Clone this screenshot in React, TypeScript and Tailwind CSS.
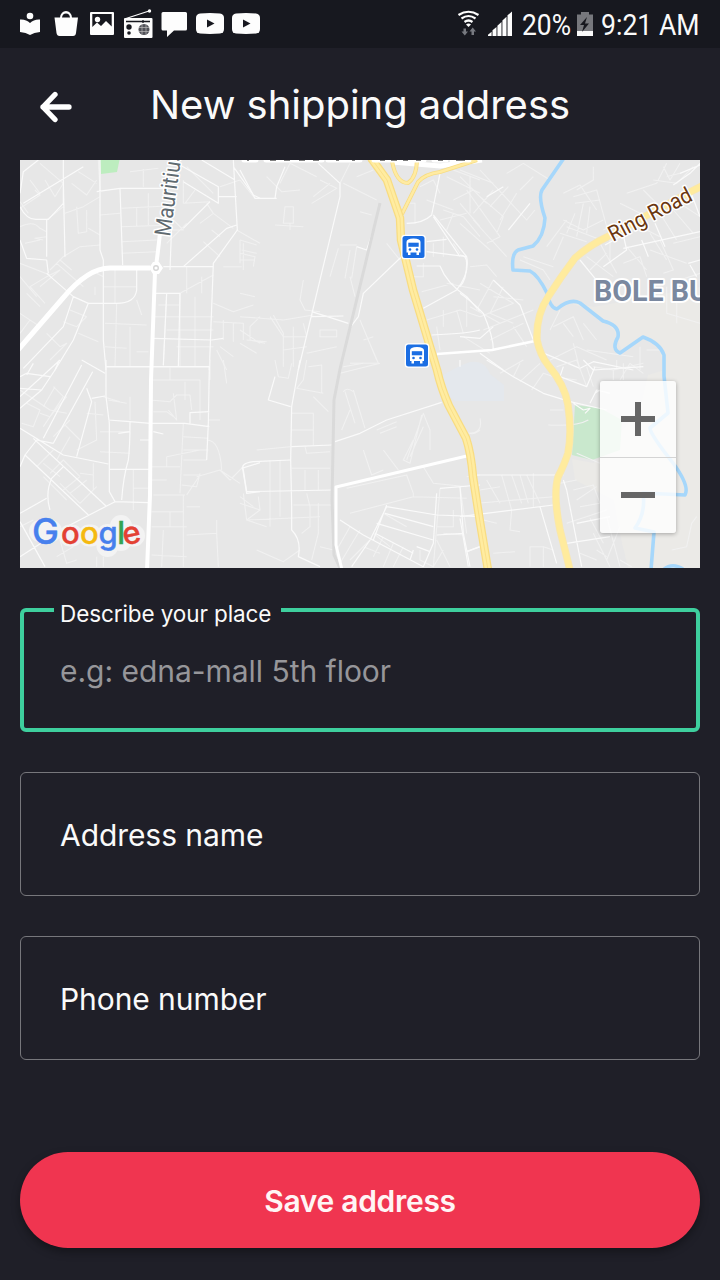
import React from "react";

const ink = "#fdfdfd";

function StatusIcons() {
  return (
    <svg width="244" height="34" viewBox="18 7 244 34" fill={ink}>
      <circle cx="30" cy="16" r="3.3" />
      <path d="M20 19.5Q26 19 30 23Q34 19 40 19.5V32Q34 32.300 30 35Q26 32.300 20 32Z" />
      <path d="M54.500 17.500H60Q61 11 66 11Q71 11 72 17.500H78L76 33Q75.700 36 73 36H59.500Q57 36 56.500 33Z" />
      <path d="M62 17.500Q62.500 13.500 66 13.500Q69.500 13.500 70 17.500" fill="#17181f" />
      <path fillRule="evenodd" d="M91 12H113Q114 12 114 13V34Q114 35 113 35H91Q90 35 90 34V13Q90 12 91 12ZM92.300 14V27L97 22.500L101 26L106 21L111.700 26.500V14Z" />
      <circle cx="97.500" cy="19.500" r="2.700" />
      <path d="M126 18.500L149 11" stroke={ink} strokeWidth="1.300" />
      <circle cx="149.500" cy="11" r="1.700" />
      <rect x="124" y="18" width="28.500" height="20" rx="1" />
      <path d="M126 21.500H150M143 20V23" stroke="#17181f" strokeWidth="1.300" />
      <circle cx="129" cy="27" r="2.700" fill="#17181f" />
      <circle cx="129" cy="33" r="1.800" fill="#17181f" />
      <circle cx="144" cy="29.500" r="5.500" fill="#505158" />
      <path d="M139 27.500H149M139 31.500H149M142 24.500V34.500M146 24.500V34.500" stroke="#bbb" strokeWidth=".7" />
      <path d="M163 12H185.500Q187 12 187 13.500V29Q187 30.500 185.500 30.500H174L167 37V30.500H163Q161.500 30.500 161.500 29V13.500Q161.500 12 163 12Z" />
      {[196, 232].map((x) => (
        <g key={x}>
          <path d={`M${x + 4} 13.500Q${x + 14} 12.500 ${x + 24} 13.500Q${x + 28} 14 ${x + 28} 18V29Q${x + 28} 33 ${x + 24} 33.500Q${x + 14} 34.300 ${x + 4} 33.500Q${x} 33 ${x} 29V18Q${x} 14 ${x + 4} 13.500Z`} />
          <path d={`M${x + 11} 19.500V27.500L${x + 18.500} 23.500Z`} fill="#17181f" />
        </g>
      ))}
    </svg>
  );
}

function SignalIcons() {
  return (
    <svg width="56" height="30" viewBox="457 9 56 30" fill="none">
      <g stroke={ink} strokeWidth="2.200">
        <path d="M458.500 15Q468.500 8.500 478.500 15" />
        <path d="M461.500 18.500Q468.500 13.500 475.500 18.500" />
        <path d="M464.500 22Q468.500 19 472.500 22" />
      </g>
      <path d="M466 24.500Q468.500 22.500 471 24.500L468.500 27Z" fill={ink} />
      <path d="M463.500 28.500H466V31.500H468L464.800 35.500L461.500 31.500H463.500ZM471.500 35V31.500H469.500L472.700 27.500L476 31.500H474V35Z" fill="#777980" />
      <path d="M488 36V34.800L491.600 31.700V36ZM492.500 36V30.300L496.500 27V36ZM497.400 36V25.800L501.500 22V36ZM502.400 36V20.500L506.500 16.800V36ZM507.500 36V15.300L512 11.500V36Z" fill={ink} />
    </svg>
  );
}

function Bus({ x, y }: { x: number; y: number }) {
  return (
    <g transform={`translate(${x} ${y})`}>
      <rect x="-1.300" y="-1.300" width="24.600" height="24.600" rx="3.500" fill="#fff" />
      <rect width="22" height="22" rx="2.500" fill="#1b6ee3" />
      <path d="M4 6Q4 2.500 11 2.500Q18 2.500 18 6V16.500H16.500V19H14V16.500H8V19H5.500V16.500H4Z" fill="#fff" />
      <path d="M5.800 6.700H16.200V10.800H5.800Z" fill="#1b6ee3" />
      <circle cx="7.500" cy="13.500" r="1.300" fill="#1b6ee3" />
      <circle cx="14.500" cy="13.500" r="1.300" fill="#1b6ee3" />
    </g>
  );
}

type Tile = { x: number; y: number; faint: string; streets: string };

// Street geometry, one tile per part of town, three units to a pixel.
const tiles: Tile[] = [
  {
    x: 20,
    y: 160,
    faint:
      "M0 145L60 105L45 90M75 60L105 110L130 70L60 10M25 160L0 125M155 70L200 105L230 60M175 35L230 70M330 35L415 25M370 28V80M240 90L235 0M30 60L60 100M80 230L45 235L70 240M130 140L80 180M135 160L190 140L240 110M170 140L175 220L200 215L200 150M130 290L180 260L240 255M0 200Q40 180 60 205L80 215M15 250L60 240M240 165L300 160M305 145L440 138M305 200L455 195M305 245L410 240M305 280L410 275M350 145V200M385 100V195M240 225L205 205M90 330L130 290M60 380L120 330L80 350L30 380L75 430M0 310L90 345M20 400L60 440M0 460L60 500M120 300L155 330M110 310L190 380M0 350L50 410M250 380H350M225 380V405M250 350L230 340M285 330V430M480 400L580 345M500 190L440 250M490 130L570 125M560 130L580 160L540 190M580 160L640 205M460 180L490 210L455 210M490 60V130M525 90L495 130M580 100L500 20M600 80L660 60M550 245L600 290M600 230L575 210M650 210L720 250M660 240V310M665 270L710 280M610 320H665M480 400V620M525 410V620M440 400L430 620M415 435H480M400 470H580M440 510H580M470 560H580M500 320V400M545 350V400M580 430L640 455L700 435M580 485L670 490V540M610 480V540M640 490V545M600 560L640 590M590 570L620 630M660 550L710 580M255 490L380 495M290 430L285 620M330 500V620M255 560L320 565M350 575L385 575M0 520L30 480M80 520L120 560L140 550L90 600M150 450L200 470L170 500L130 485M175 520L235 545M350 420L365 465",
    streets:
      "M0 140Q20 180 50 178H85L130 130V0M10 130L190 20M130 65L135 290M55 0L10 35L0 100M80 178V290M80 340L160 410L205 430L290 430Q345 430 350 390V330M0 240L20 295L80 300L85 340M160 410L130 500L10 625M205 430L160 540L105 630M240 0V90L240 270L250 300V540L258 630M230 95L300 85H430L440 110M300 85L308 315M480 15L595 80V130L490 65M595 110H650M545 0L645 60M640 0L652 210L580 310L568 630M580 320H430M490 320L620 205L650 195M455 195L450 330M400 400H480L475 620M440 400L430 615M400 535L575 540L610 535M258 620H568M490 205L570 125M640 20L700 105L720 115",
  },
  {
    x: 240,
    y: 160,
    faint:
      "M0 60L45 115M120 70L150 10L230 50M80 50L125 95L180 90M135 140H160V190H130ZM105 195L190 200M150 190V210M215 130L290 85L240 60M220 110L270 70M310 70L410 120M330 10L300 70M350 50L400 30M360 155L395 165M300 255H350M295 265L270 350M330 270L315 355M350 260L335 355M0 240L50 255M0 280L45 290L40 320M0 300H45M10 250V330M0 400L45 410M190 360L180 420L195 450L240 455M60 470L30 500V540L75 550M100 465L130 520V620M0 470L130 480L220 465M160 500V620M190 490L200 530H130M240 530H290V510H240ZM200 580L290 560M330 610L415 610L385 540M370 540L400 530M360 480L410 600M330 350L345 410M500 130L525 130V190M540 80L580 60L600 100M560 120L640 150M610 150L670 170L720 230M640 160L620 210M600 180L680 160M620 50L720 100M640 30L720 60M690 50V160M640 120L700 90M520 350H550V310M580 250V290M610 230V290M640 250L660 280M545 395L640 370M620 370L720 390M560 480L660 450L720 470M610 450V500M650 450L670 520M600 570L590 500M680 410V500M440 250L480 300M130 570L200 560M90 470L130 530M20 540L80 545M0 510L60 550",
    streets:
      "M235 10L300 70L300 110L175 630M0 30L45 115H110M135 20L110 80L105 115M490 285L370 400L355 470L325 510M215 455L325 490M215 470L310 468M500 190Q550 190 575 165L600 40M580 165L680 290Q690 340 650 390L550 445M560 245L620 238M560 275L680 290M530 318H600Q620 370 680 410L720 455M575 525Q690 520 720 510M580 170L660 290M400 210L380 270L350 260",
  },
  {
    x: 460,
    y: 160,
    faint:
      "M60 30L200 180L225 150M0 50L80 130M20 90L120 230L80 250M40 180L140 290M0 130L60 200M60 110L130 170L110 220M0 190L90 270M100 90L40 160M145 80L90 140M170 100L120 180M140 40L190 10L270 60M220 50L180 90M0 30L100 70M30 320L80 315L110 350M180 300L250 330L270 360M190 290L280 320M310 100L360 75L410 150M350 90L400 60V20M340 110L410 90L440 200M345 130L420 120M310 180L370 210L430 180M320 200L410 235M300 220L380 245M310 230L280 300M260 260L320 180M345 160L320 220M370 130L350 230M390 140L380 220M430 210L470 190M480 130L540 160M550 90L590 130M500 100L590 70L620 10M580 60L650 70L700 20M610 20L630 60L660 10M620 50L660 40M600 160L650 240M640 150L700 220M660 130L720 170M540 200L600 230M570 220L620 300M500 260L560 330M420 250L470 340M380 290L460 350M390 330L440 280M450 230V310M490 310L540 290L560 350M570 270L680 310M600 240L640 330L610 340M640 250L720 230M660 360L720 340M620 380V460L720 490M650 400V490M100 360L50 450M60 370L160 430L60 470M130 380L90 460L160 490M30 440L120 490M70 510L220 450M10 530L90 580M90 540L190 490M160 500L200 560M280 500L340 470L370 540M310 490L340 530M370 490L410 540M270 600L350 560L440 600M340 550L360 630M380 570L520 590M470 600V630M540 560V630M560 570H600M300 450L270 510M100 410L190 420",
    streets:
      "M0 285Q20 285 20 310Q20 360 0 380M100 360L180 435L220 540M0 400Q30 420 70 460Q100 530 100 570M80 110L130 80M145 210L210 130M360 300L405 355M435 255L490 225L500 270L430 320M490 265L720 215M585 190L615 260M545 240L565 290M690 90L720 170M640 75L690 40L720 10M685 310L720 300M690 315L710 350M60 580L130 630M240 575L360 625L400 605L520 630M0 530L60 535L100 500M660 40L720 15",
  },
  {
    x: 0,
    y: 360,
    faint:
      "M60 90L150 150L200 160M80 130L120 150L100 200L65 190M160 80L190 110L130 200M165 80L130 140M120 160L150 170L200 110M260 160L310 165M285 125L290 240L230 270M325 120L380 130M310 110L360 125M390 110V180M300 275L390 280M300 215H390M160 230L210 180M195 195L240 240M210 230L170 300M130 310L180 350M110 320L160 270M130 350L200 420M150 340L190 300L240 350M180 370L240 430M190 390L240 350M210 400L260 360M240 430L290 380M280 310V390M240 340L280 345M180 540L200 610L230 600M170 590L220 560M200 500L180 530M290 590V620M310 590V620M60 500L100 480M450 60H600V180M510 20V60M555 65V120M450 120L510 125L530 105H570L575 150M505 150L530 180L520 100M460 155H500L520 170M550 190L540 400M550 230L625 235M550 270H625M500 290L600 270M500 290V320M550 300H620M550 345H600L560 405M545 375L590 380L600 340M590 350L660 330L720 370M620 240Q660 240 665 330M625 180H660M630 60V0M670 0L680 70M550 405V620M460 405H555M455 455H550M510 455V500M455 500H560M490 510L485 620M455 585L560 590M560 440H600M560 525L650 520L655 620M650 480V520M400 330V450M400 385H450M450 360H500M450 320H540M660 330L690 360L730 320M730 400L740 480L780 450M720 410L760 440",
    streets:
      "M60 50L80 40L150 50M60 85L125 90L60 145M178 0L165 30L125 90M180 0L60 110M245 0L315 40M245 15L130 235M278 35L160 250M260 85L275 125L230 290M275 115L315 108M318 0V110L328 190V395L345 425L445 428M318 20H628L625 190L620 300M325 180L390 185L450 190L555 190L628 200M390 185Q390 260 385 300Q370 350 365 420M330 328H450M60 205L190 285L325 312M100 235L318 438M75 285L265 465M345 425L200 500L60 590M60 460L140 415M150 450Q135 400 155 355L190 320M60 320L75 285L110 240L160 250M60 485L135 620M570 190V158L628 155M725 325L780 308M728 325L740 400L780 395M80 45L100 10M355 220L390 215M420 240H450M460 215L490 222",
  },
  {
    x: 240,
    y: 360,
    faint:
      "M105 0L115 50L145 55L155 10M200 0L190 60L170 85L250 100M205 20L245 15V100M220 110L265 155M155 160H220V255M155 210H220M50 270L150 260M195 260L200 280L270 275M90 300V500M120 300V470M0 430L60 450L55 410M20 480L240 470M155 325H270M195 330V390M235 330V390M200 400L210 440V500L185 520M235 430V520L215 600M160 435H280M20 480L80 500M50 570L130 605L180 570M240 560L280 570M300 40L420 10M310 20L370 10M315 95L345 190M340 90L375 205M305 210L330 150M310 95Q320 80 340 95M370 270L395 345L430 330M430 270L475 330M500 300L550 160L570 210V270M545 165L510 310L490 300L520 240M550 200L510 290M410 210L470 185M420 220L470 200M320 385L500 345L520 400V410L330 460M550 320L580 370L680 380M520 410L680 415M600 385L580 620M660 380L680 520M590 500H640V450M430 460L500 500M400 520L450 560M430 530L400 590M460 550L430 620M490 560L460 620M360 510L300 610M330 500L290 570M390 540L330 600M420 580L370 560M540 570V600L580 620L610 570M590 540L630 620M690 220Q700 225 720 210M610 520L670 525M680 350L720 345",
    streets:
      "M180 0L155 140L152 300L155 440V510Q185 540 175 590L240 620M105 50L85 120L152 140M285 245L360 220L440 180L605 127M155 260L275 255M150 300L40 305Q0 310 10 330L20 395L280 390M300 480L370 525L550 620M335 620L390 540L440 440L590 465L720 470M435 460L580 500M410 490L580 540M405 520L520 580M590 400L580 550L550 620M600 385L720 375M660 380L670 520L690 620M590 525L670 520M680 575L720 560M520 570L510 600M530 560L570 575M440 435L400 540",
  },
  {
    x: 460,
    y: 360,
    faint:
      "M120 40L190 0M180 65L240 10M215 90L250 40L310 60M160 50L180 10M290 20L350 0L380 80M310 55L350 60M380 20L400 80M400 20L460 30L550 10M460 30V60M480 60L510 10L550 40M490 10V60M265 195Q350 200 385 180M270 150H310M60 175Q70 220 25 220M125 345L155 450L150 510L180 515M155 345L185 430M180 345L205 430M200 345L240 430M220 340V440M80 360L120 430M60 390L120 380M50 430L280 410M60 460V530M70 480L110 490M340 390L400 375L420 430M350 420L410 380M360 440L420 430M300 370L350 360M320 490L440 450M390 475L430 550M400 520L450 620M440 470L480 620M250 620V560L210 560V620M250 560L280 570M360 580L410 600M410 570L440 590M480 500L440 600M480 600L515 620M635 570L680 560L695 490L710 470M100 580L165 575M350 280L420 310",
    streets:
      "M80 0L160 50L250 100L330 125L440 150M310 20L300 50L380 80L405 20M390 130L410 90L450 100M340 130L370 150L390 145L375 160M0 20V0M50 345H310M0 470L280 435M240 440L290 610M310 360L320 390L365 620M0 475L25 620M320 550L450 530M350 490L450 470M20 575L60 560M405 100L420 90M370 0L400 30L550 20",
  },
];

function RoadMap() {
  const ring =
    "M702 186L690 192L607 237Q590 245 575 258Q560 278 548 297Q536 315 537 340Q540 355 548 365Q565 385 568 405Q572 433 568 453Q565 463 558 477Q553 495 560 530L570 570";
  const trunk =
    "M371 158L387 180L400 218L401 240L413 290L437 370Q441 388 449 406L466 438Q471 453 473 477L480 522L488 570";
  return (
    <svg width="680" height="408" viewBox="20 160 680 408" fill="none" className="block">
      <rect x="20" y="160" width="680" height="408" fill="#e7e7e7" />
      <path d="M566 302L594 307L700 287V568H628L619 530L614 500L575 480L572 459L594 463L640 410L648 375L665 370L658 345L640 338L622 352L614 330L590 310Z" fill="#ebeae7" />
      <path d="M439 378Q455 367 470 362Q485 360 490 374L504 385V401H455Q440 390 439 378Z" fill="#e4e8ed" />
      <path d="M575 405L600 408L622 420L620 450L592 460L572 455Z" fill="#c9e8cd" />
      <path d="M100 160H119.500L117 172L101 174Z" fill="#bdedbf" />
      {tiles.map((t, i) => (
        <g key={i} transform={`translate(${t.x} ${t.y}) scale(.33333)`} strokeLinejoin="round">
          <path d={t.faint} stroke="#f1f1f1" strokeWidth="3.200" />
          <path d={t.streets} stroke="#fafafa" strokeWidth="3.600" />
        </g>
      ))}
      <path d="M380 203L340 369L334 400L332 500L334 555L340 568" stroke="#dadada" strokeWidth="3" />
      <g stroke="#fff" strokeLinejoin="round">
        <path d="M18 350L63 298Q88 268 110 268H150" strokeWidth="5" />
        <path d="M160 233Q158 252 156 266M155 272L151 380L150 495L147 570" strokeWidth="4" />
        <path d="M471 455L336 487V545L342 570" strokeWidth="3" />
        <path d="M437 354L492 350L535 341" strokeWidth="2.600" />
      </g>
      <path d="M149 268L153 262H159L163 268L159 274H153Z" fill="#fff" />
      <circle cx="156" cy="268" r="2.300" stroke="#d6d6d6" strokeWidth="1.400" />
      <g stroke="#a6d7fb" strokeWidth="3.600" strokeLinejoin="round">
        <path d="M564 158L542 190Q538 197 545 218Q544 237 533 246L518 250Q511 254 513 270L530 271Q538 275 547 293Q550 308 557 309Q570 298 580 303L603 321Q620 325 618 337Q611 349 620 353L643 337Q660 343 664 355V376L668 413L650 428Q650 434 673 463Q690 486 685 495L643 493Q646 513 635 528L654 532L651 570" />
        <path d="M663 570Q672 562 683 569" />
      </g>
      <path d="M392 162L440 166L482 160" stroke="#fff" strokeWidth="5" />
      <g stroke="#f7dc83" strokeWidth="4">
        <path d="M392 161Q396 183 408 183Q417 177 417 158M477 160L440 172Q425 174 418 182L402 214M386 178L401 213" />
      </g>
      <g stroke="#ffeba2" strokeWidth="2.500">
        <path d="M392 161Q396 183 408 183Q417 177 417 158M477 160L440 172Q425 174 418 182L402 214" />
      </g>
      <path d={trunk} stroke="#f8dc82" strokeWidth="8.500" />
      <path d={trunk} stroke="#ffeca0" strokeWidth="6" />
      <path d={trunk} stroke="#f9dc84" strokeWidth=".8" />
      <path d={ring} stroke="#f9e7ae" strokeWidth="7.500" />
      <path d={ring} stroke="#ffeb9d" strokeWidth="5.800" />
      <path d="M244 160H256M266 160H322M328 160H360M374 160H424M434 160H446M452 160H469" stroke="#fff" strokeWidth="5" strokeLinecap="round" />
      <path d="M247 160H249M270 160H276M284 160H290M299 160H305M313 160H319M336 160H339M352 160H355M380 160H385M391 160H397M403 160H408M416 160H421M438 160H443M456 160H465" stroke="#555" strokeWidth="1.600" />
      <Bus x={402.5} y={236} />
      <Bus x={406} y={344.500} />
      <g className="font-[Roboto,sans-serif]" stroke="#fff" strokeLinejoin="round" style={{ paintOrder: "stroke" }}>
        <text transform="translate(170 237) rotate(-82)" fontSize="22.500" textLength="86" lengthAdjust="spacingAndGlyphs" fill="#5f6a70" strokeWidth="3">Mauritius</text>
        <text transform="translate(613 242) rotate(-27.500)" fontSize="22" textLength="91" lengthAdjust="spacingAndGlyphs" fill="#6b3710" strokeWidth="3">Ring Road</text>
        <text x="594" y="301" fontSize="29" fontWeight="700" textLength="114" lengthAdjust="spacingAndGlyphs" fill="#7a889f" strokeWidth="4">BOLE BU</text>
      </g>
      <path d="M40 531H51M70 535.500H72M89 535.500H91M107.500 535V546M121 526V540M133 535.500H134" stroke="#f3f3f3" strokeWidth="22" strokeLinecap="round" />
      <g className="font-[Inter,sans-serif]" fontSize="31" fontWeight="500" strokeWidth=".4">
        <text y="544" x="32 61 80 98.500 117.300 124.500" rotate="0 0 0 0 0 -12">
          <tspan fill="#4780ed" stroke="#4780ed" fontSize="36">G</tspan>
          <tspan fill="#e34133" stroke="#e34133">o</tspan>
          <tspan fill="#f5b90f" stroke="#f5b90f">o</tspan>
          <tspan fill="#4780ed" stroke="#4780ed">g</tspan>
          <tspan fill="#35a352" stroke="#35a352">l</tspan>
          <tspan fill="#e34133" stroke="#e34133" dy="1.500">e</tspan>
        </text>
      </g>
    </svg>
  );
}

function ZoomControls() {
  return (
    <div className="absolute right-6 bottom-[35px] flex h-[152px] w-19 flex-col rounded-[3px] bg-white/80 shadow-[0_1px_4px_rgba(0,0,0,0.3)]">
      <button aria-label="+" className="flex h-[77px] items-center justify-center border-b border-[#d4d4d4]">
        <svg width="34" height="34" stroke="#666" strokeWidth="6">
          <path d="M0 17H34M17 0V34" />
        </svg>
      </button>
      <button aria-label="−" className="flex h-[75px] items-center justify-center pb-px">
        <svg width="34" height="34" stroke="#666" strokeWidth="6">
          <path d="M0 17H34" />
        </svg>
      </button>
    </div>
  );
}

function Field({ label }: { label: string }) {
  return (
    <div className="flex h-[124px] items-center rounded-md border border-[#77777c] pt-0.5 pl-[39px] text-[30px] tracking-[-0.07px] text-[#fafafa]">
      <span>{label}</span>
    </div>
  );
}

export default function App() {
  return (
    <div className="flex h-[1280px] w-[720px] flex-col overflow-hidden bg-[#1f1f28] font-[Inter,sans-serif] text-white">
      <div className="flex h-12 shrink-0 items-center justify-between bg-[#17181f] pr-2.5 pl-[18px]">
        <StatusIcons />
        <div className="flex items-center">
          <SignalIcons />
          <svg width="197" height="46" viewBox="513 1 197 46" fill="#fafafa" className="font-[Roboto,sans-serif]">
            <text x="522" y="35" fontSize="30" textLength="49" lengthAdjust="spacingAndGlyphs">20%</text>
            <path d="M577 14.500H581V12H589V14.500H593V36H577Z" fill="#77787d" />
            <path d="M577 31H593V36H577Z" />
            <path d="M587 17L580 25H584L582 32L589 23.500H585Z" fill="#17181f" />
            <text x="601" y="35" fontSize="30" textLength="98.500" lengthAdjust="spacingAndGlyphs">9:21 AM</text>
          </svg>
        </div>
      </div>
      <header className="flex h-28 shrink-0 items-center pl-[39px]">
        <svg width="33" height="32" viewBox="0 0 33 32" fill="none" stroke="#fff" strokeWidth="5.300" strokeLinecap="round" strokeLinejoin="round" className="mt-[5px]">
          <path d="M16 3.500L4 16L16 28.500M4 16H30" />
        </svg>
        <h1 className="mt-0.5 ml-[78px] text-[40px] leading-none font-normal tracking-[-0.03px] whitespace-nowrap text-[#fafafa]">New shipping address</h1>
      </header>
      <main className="flex flex-1 flex-col px-5">
        <div className="relative">
          <RoadMap />
          <ZoomControls />
        </div>
        <div className="mt-10 flex flex-col gap-10">
          <div className="relative flex h-[124px] items-center rounded-md border-4 border-[#3ecf9e] pt-0.5 pl-9 text-[30px] tracking-[-0.03px] text-[#96969a]">
            <span className="absolute -top-[13px] left-[30px] bg-[#1f1f28] pr-2.5 pl-1.5 text-[22.500px] leading-[30px] tracking-[-0.1px] whitespace-nowrap text-[#fafafa]">Describe your place</span>
            <span>e.g: edna-mall 5th floor</span>
          </div>
          <Field label="Address name" />
          <Field label="Phone number" />
        </div>
        <button className="mt-[92px] h-24 rounded-full bg-[#f03550] pt-[3px] text-[30px] font-semibold tracking-[-0.3px] text-[#fff5f5] shadow-[0_4px_8px_rgba(0,0,0,0.35)]">Save address</button>
      </main>
    </div>
  );
}
